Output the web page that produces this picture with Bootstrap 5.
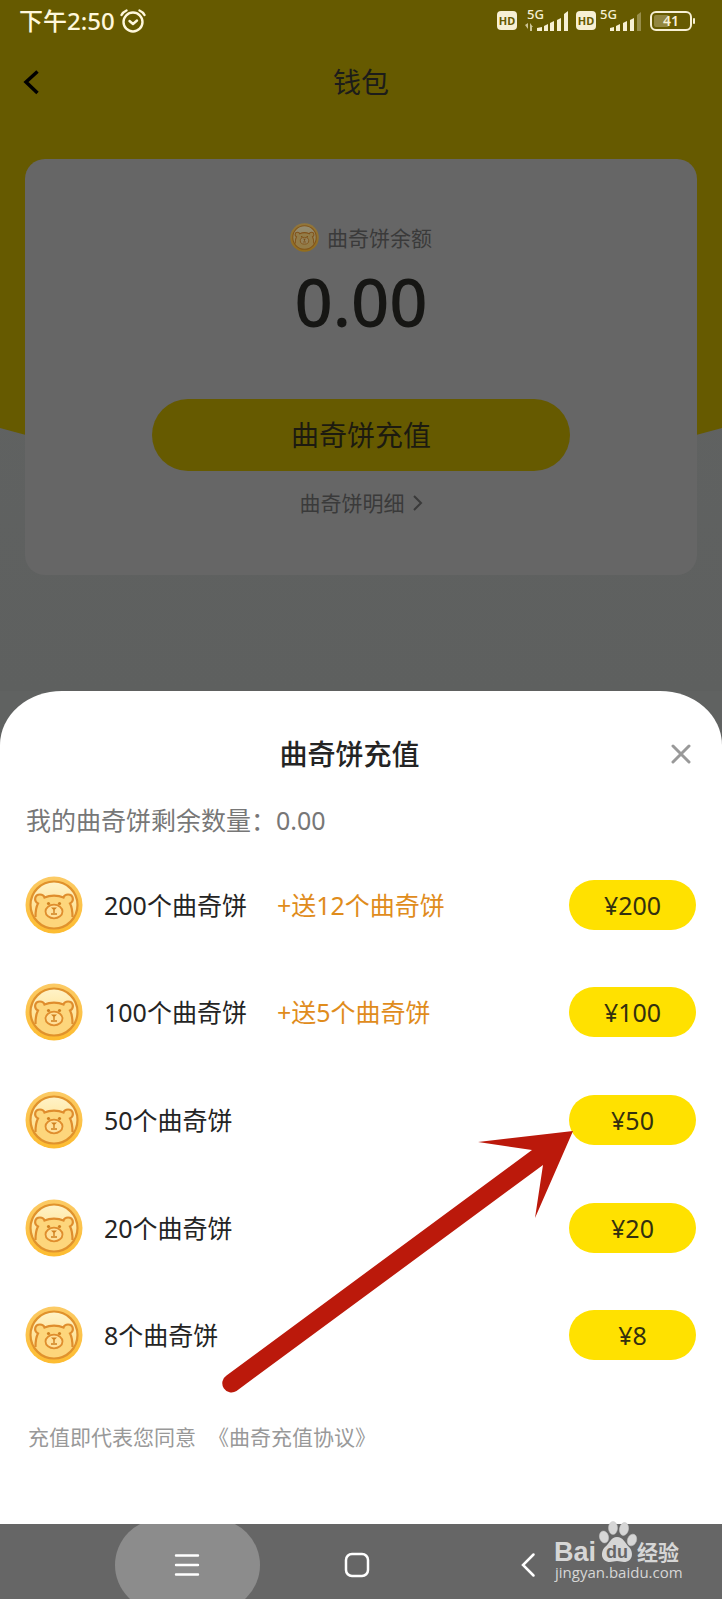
<!DOCTYPE html>
<html lang="zh-CN">
<head>
<meta charset="utf-8">
<meta name="viewport" content="width=device-width, initial-scale=1">
<title>钱包</title>
<link href="https://cdn.jsdelivr.net/npm/bootstrap@5.3.0/dist/css/bootstrap.min.css" rel="stylesheet">
<style>
  body { font-family: "Noto Sans", "Noto Sans CJK SC", sans-serif; background: #606261; color: #1c1c1a; }
  svg { display: block; flex: none; }
  .wallet { background: linear-gradient(#626464, #5e605f); padding-bottom: 116px; }
  .glow { position: absolute; top: 0; left: 0; width: 100%; height: 450px; }
  .status { height: 42px; padding: 0 26px 0 19px; color: #fff8dc; }
  .clock { font-size: 24px; line-height: 30px; font-weight: 500; }
  .topbar { height: 80px; }
  .topbar h1 { font-size: 28px; line-height: 40px; font-weight: 400; }
  .topbar .btn { left: 12px; }
  .balance { margin: 37px 25px 0; background: #666; border-radius: 20px; padding: 64px 24px 58px; }
  .note { font-size: 21px; line-height: 28px; color: #3a3a3a; }
  .amount { font-size: 67px; line-height: 72px; font-weight: 500; margin: 13px 0 62px; color: #161614; }
  .charge { width: 67%; height: 72px; border-radius: 36px; background: #665a00; font-size: 28px; line-height: 40px; color: #1c1a10; }
  .detail { margin-top: 18px; }
  .coin-sm { filter: brightness(.58); }
  .sheet { background: #fff; border-radius: 62px 62px 0 0 / 54px 54px 0 0; padding: 43px 26px 66px 25px; color: #242424; }
  .sheet h2 { font-size: 28px; line-height: 40px; font-weight: 500; }
  .remain { font-size: 25px; line-height: 36px; color: #777; margin: 28px 0 13px 1px; }
  .packs { min-height: 538px; font-size: 25px; line-height: 36px; }
  .packs ul { min-height: inherit; }
  .packs .me-3 + span { margin-left: 5px; }
  .bonus { color: #e08c1c; margin-left: 30px; }
  .price { width: 127px; height: 50px; border-radius: 25px; background: #ffe100; color: #33300f; font-size: 25px; line-height: 36px; }
  .price:hover, .charge:hover { background: #f2d600; }
  .pointer { position: absolute; left: 197px; top: 279px; pointer-events: none; }
  .terms { font-size: 21px; line-height: 30px; color: #999; margin: 33px 0 0 3px; }
  .terms a { color: inherit; margin-left: 12px; }
  .sysnav { background: #666; height: 75px; padding: 7px 15% 0 14%; }
  .sysnav .btn { flex: 1 1 0; }
  .pressed { position: absolute; inset: 0; overflow: hidden; }
  .pressed span { position: absolute; left: 115px; top: -5px; width: 145px; height: 92px; border-radius: 46px; background: #8c8c8c; }
  .brand { position: absolute; right: 38px; bottom: 15px; }
</style>
</head>
<body>
<svg width="0" height="0" class="position-absolute" aria-hidden="true">
  <defs>
    <linearGradient id="rim" x1="0" y1="0" x2="0" y2="1"><stop offset="0" stop-color="#fccb66"/><stop offset="1" stop-color="#fdbc30"/></linearGradient>
    <linearGradient id="face" x1="0" y1="0" x2="0" y2="1"><stop offset="0" stop-color="#fff3c8"/><stop offset="1" stop-color="#ffd877"/></linearGradient>
    <symbol id="coin" viewBox="0 0 58 58">
      <circle cx="29" cy="29" r="28.5" fill="url(#rim)"/>
      <circle cx="29" cy="29" r="23.5" fill="url(#face)"/>
      <path d="M10 42C10 36 11 31 13 27.500C8.500 25 9.500 18.500 15 18.500C17.500 18.500 19 20 19.500 21.500C25 19 33 19 38.500 21.500C39 20 40.500 18.500 43 18.500C48.500 18.500 49.500 25 45 27.500C47 31 48 36 48 42C44 49 37 52 29 52S14 49 10 42Z" fill="#fdd67c"/>
      <path d="M10.500 41C10.500 36 11 31 13 27.500C8.500 25 9.500 18.500 15 18.500C17.500 18.500 19 20 19.500 21.500C25 19 33 19 38.500 21.500C39 20 40.500 18.500 43 18.500C48.500 18.500 49.500 25 45 27.500C47 31 47.500 36 47.500 41" fill="none" stroke="#df8d2d" stroke-width="2.200"/>
      <circle cx="29" cy="29" r="23.5" fill="none" stroke="#e0922c" stroke-width="2.200"/>
      <ellipse cx="29" cy="35.500" rx="8.500" ry="6.800" fill="#ffe09a" stroke="#df8d2d" stroke-width="1.800"/>
      <g fill="#d0801f"><circle cx="23.500" cy="27.500" r="1.600"/><circle cx="34.500" cy="27.500" r="1.600"/><path d="M26 31.500h6L29 34.500z"/></g>
      <path d="M29 34v3M26 38h6" fill="none" stroke="#d0801f" stroke-width="1.400"/>
    </symbol>
  </defs>
</svg>

<div class="min-vh-100 d-flex flex-column">
  <div class="wallet position-relative">
    <svg class="glow" viewBox="0 0 722 450" preserveAspectRatio="none" aria-hidden="true"><path d="M0 0H722V428Q541 480 361 480T0 428Z" fill="#665a00"/></svg>
    <div class="position-relative">
      <div class="status d-flex align-items-center justify-content-between">
        <div class="d-flex align-items-center gap-1">
          <span class="clock">下午2:50</span>
          <svg width="28" height="26" viewBox="0 0 28 26" fill="none" stroke="#fff8dc" stroke-width="2.400" stroke-linecap="round" stroke-linejoin="round"><circle cx="14" cy="14" r="9.500"/><path d="M10.500 13l3.500 3 4-3.500M2.500 7Q4 4 7.500 2.500M25.500 7Q24 4 20.500 2.500"/></svg>
        </div>
        <svg width="200" height="30" viewBox="0 0 200 30" fill="#f7f0d4" font-family="Noto Sans, sans-serif">
          <rect x="1" y="5" width="20" height="19" rx="4"/><text x="11" y="19" font-size="11" font-weight="700" text-anchor="middle" fill="#665a00">HD</text>
          <text x="31" y="13" font-size="13" font-weight="500">5G</text>
          <path d="M29 19l3 4v-6zM34 25v-8l3 4h-1v4z" opacity=".7"/>
          <path d="M41 22l5-1v4h-5zM48 20l4-2v7h-4zM54 17l4-2v10h-4zM61 14l4-2v13h-4zM68 8l4-3v20h-4z"/>
          <rect x="80" y="5" width="20" height="19" rx="4"/><text x="90" y="19" font-size="11" font-weight="700" text-anchor="middle" fill="#665a00">HD</text>
          <text x="104" y="13" font-size="13" font-weight="500">5G</text>
          <path d="M114 22l4-1v4h-4zM120 20l4-2v7h-4zM127 17l4-2v10h-4zM134 14l4-2v13h-4z"/><path d="M141 9l4-3v19h-4z" opacity=".35"/>
          <rect x="155" y="6" width="40" height="18" rx="5" fill="none" stroke="#f7f0d4" stroke-width="2"/>
          <rect x="158" y="9" width="15" height="12" rx="2" opacity=".3"/>
          <rect x="197" y="12" width="2" height="6" rx="1"/>
          <text x="175" y="20" font-size="14" font-weight="600" text-anchor="middle">41</text>
        </svg>
      </div>
      <header class="topbar d-flex align-items-center justify-content-center position-relative">
        <button class="btn p-2 border-0 position-absolute" aria-label="返回"><svg width="22" height="28" viewBox="0 0 22 28" fill="none" stroke="#000" stroke-width="3.500"><path d="M17.500 3.500L6 14l11.500 11"/></svg></button>
        <h1 class="m-0">钱包</h1>
      </header>
      <main class="balance d-flex flex-column align-items-center">
        <div class="note d-flex align-items-center gap-2">
          <svg class="coin-sm" width="29" height="29"><use href="#coin"/></svg><span>曲奇饼余额</span>
        </div>
        <div class="amount">0.00</div>
        <button class="btn charge border-0 p-0">曲奇饼充值</button>
        <a href="#" class="note detail text-decoration-none d-flex align-items-center gap-2">曲奇饼明细
          <svg width="10" height="18" viewBox="0 0 10 18" fill="none" stroke="#3a3a3a" stroke-width="2"><path d="M1 2l7 7-7 7"/></svg></a>
      </main>
    </div>
  </div>

  <section class="sheet flex-grow-1" aria-labelledby="sheetTitle">
    <div class="d-flex align-items-center">
      <h2 id="sheetTitle" class="m-0 flex-grow-1 text-center ps-2">曲奇饼充值</h2>
      <button class="btn border-0 p-1" aria-label="关闭"><svg width="22" height="22" viewBox="0 0 22 22" fill="none" stroke="#999" stroke-width="3" stroke-linecap="round"><path d="M3 3l16 16M19 3L3 19"/></svg></button>
    </div>
    <p class="remain">我的曲奇饼剩余数量：0.00</p>
    <div class="packs position-relative">
      <ul class="list-unstyled m-0 d-flex flex-column">
        <li class="d-flex align-items-center flex-fill"><svg class="me-3" width="58" height="58"><use href="#coin"/></svg><span>200个曲奇饼</span><span class="bonus">+送12个曲奇饼</span><button class="btn price border-0 p-0 ms-auto">¥200</button></li>
        <li class="d-flex align-items-center flex-fill"><svg class="me-3" width="58" height="58"><use href="#coin"/></svg><span>100个曲奇饼</span><span class="bonus">+送5个曲奇饼</span><button class="btn price border-0 p-0 ms-auto">¥100</button></li>
        <li class="d-flex align-items-center flex-fill"><svg class="me-3" width="58" height="58"><use href="#coin"/></svg><span>50个曲奇饼</span><button class="btn price border-0 p-0 ms-auto">¥50</button></li>
        <li class="d-flex align-items-center flex-fill"><svg class="me-3" width="58" height="58"><use href="#coin"/></svg><span>20个曲奇饼</span><button class="btn price border-0 p-0 ms-auto">¥20</button></li>
        <li class="d-flex align-items-center flex-fill"><svg class="me-3" width="58" height="58"><use href="#coin"/></svg><span>8个曲奇饼</span><button class="btn price border-0 p-0 ms-auto">¥8</button></li>
      </ul>
      <svg class="pointer" width="352" height="266" viewBox="0 0 352 266" fill="#bb190b" aria-hidden="true"><path d="M351 1L256 12L310 20L4.500 245.500A9 9 0 0 0 14.500 261L321 35L313 88Z"/></svg>
    </div>
    <p class="terms">充值即代表您同意<a href="#" class="text-decoration-none">《曲奇充值协议》</a></p>
  </section>

  <nav class="sysnav d-flex position-relative" aria-label="系统导航">
    <div class="pressed"><span></span></div>
    <button class="btn border-0 p-0 position-relative d-flex align-items-center justify-content-center" aria-label="菜单"><svg width="26" height="26" viewBox="0 0 26 26" stroke="#fff" stroke-width="2.400" stroke-linecap="round"><path d="M2 3.500h22M2 13h22M2 22.500h22"/></svg></button>
    <button class="btn border-0 p-0 position-relative d-flex align-items-center justify-content-center" aria-label="主页"><svg width="26" height="26" viewBox="0 0 26 26" fill="none" stroke="#fff" stroke-width="2.500"><rect x="2" y="2" width="22" height="22" rx="6"/></svg></button>
    <button class="btn border-0 p-0 position-relative d-flex align-items-center justify-content-center" aria-label="后退"><svg width="16" height="26" viewBox="0 0 16 26" fill="none" stroke="#fff" stroke-width="2.500" stroke-linecap="round"><path d="M13.500 2.500L3 13l10.500 10.500"/></svg></button>
    <svg class="brand" width="130" height="64" viewBox="0 0 130 64" fill="#d6d6d6">
      <text x="0" y="41" font-family="Liberation Sans, sans-serif" font-weight="700" font-size="27">Bai</text>
      <g stroke="#c4c4c4" stroke-width=".5"><ellipse cx="50" cy="17" rx="4.500" ry="6" transform="rotate(-15 50 17)"/><ellipse cx="59" cy="8" rx="4.500" ry="6.500"/><ellipse cx="70" cy="9" rx="4.500" ry="6.500" transform="rotate(10 70 9)"/><ellipse cx="78" cy="20" rx="4.500" ry="6" transform="rotate(20 78 20)"/></g>
      <path d="M63 17C69 17 71 23 75 27C80 32 79 42 70 42C67 42 66 41 63 41S59 42 56 42C47 42 46 32 51 27C56 23 57 17 63 17Z"/>
      <text x="63" y="38" font-family="Liberation Sans, sans-serif" font-weight="700" font-size="18" text-anchor="middle" fill="#666">du</text>
      <text x="83" y="40" font-family="Noto Sans CJK SC, sans-serif" font-weight="700" font-size="21">经验</text>
      <text x="1" y="58" font-family="Open Sans, sans-serif" font-size="15">jingyan.baidu.com</text>
    </svg>
  </nav>
</div>
<script src="https://cdn.jsdelivr.net/npm/bootstrap@5.3.0/dist/js/bootstrap.bundle.min.js"></script>
</body>
</html>
